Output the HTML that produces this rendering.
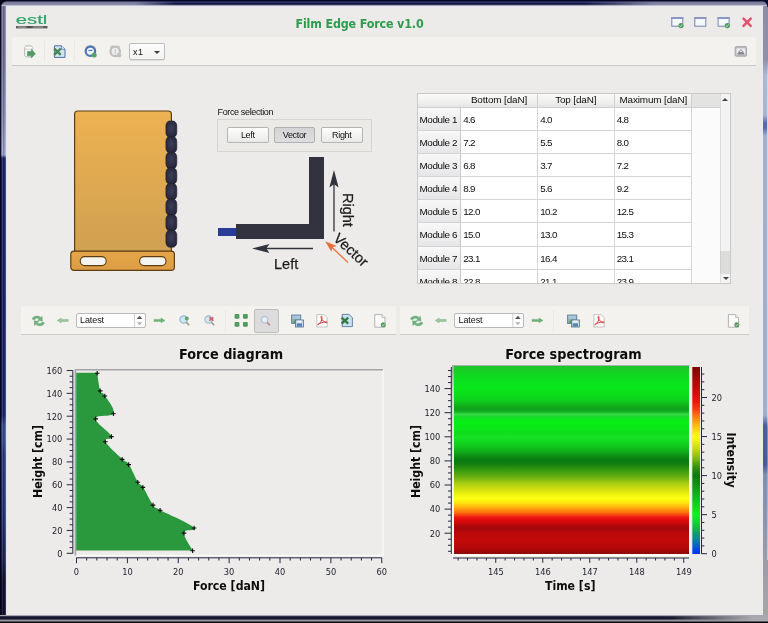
<!DOCTYPE html>
<html lang="en">
<head>
<meta charset="utf-8">
<title>Film Edge Force v1.0</title>
<style>
*{box-sizing:border-box;margin:0;padding:0}
html,body{width:768px;height:623px;overflow:hidden}
body{position:relative;background:#ecebe9;font-family:"Liberation Sans","DejaVu Sans",sans-serif;color:#1a1a1a;font-size:10px}
.abs{position:absolute}
/* window frame */
#fr-top{left:0;top:0;width:768px;height:6px;background:linear-gradient(to bottom,#03031a 0,#05052c 1px,#333d78 1.900px,#2b3269 2.700px,#15153c 3.500px,#32325a 4.500px,#8c8ca6 5.300px,#e6e6f0 6px)}
#fr-top2{left:0;top:0;width:768px;height:6px;background:linear-gradient(to bottom,#04041c 0,#0a0a2a 1.100px,#74749a 1.800px,#8383a2 3.600px,#8c8caa 4.800px,#b8b8c8 5.400px,#e6e6ea 6px);-webkit-mask-image:linear-gradient(to right,#000 0,#000 135px,transparent 175px,transparent 585px,#000 655px);mask-image:linear-gradient(to right,#000 0,#000 135px,transparent 175px,transparent 585px,#000 655px)}
#fr-thl{left:6px;top:6px;width:757px;height:2px;background:linear-gradient(to bottom,#e7e7f2,#ecebea)}
#fr-left{left:0;top:0;width:6px;height:623px;background:linear-gradient(to bottom,#7b7b9b 0,#7d7d9d 60px,#8a8eb2 110px,#a2aace 150px,#a4acd0 155px,#1e2668 158px,#1c2466 300px,#1c2868 415px,#3a5292 425px,#3c5494 440px,#2e3e84 455px,#2a3a7c 500px,#1c2450 560px,#0e0e28 580px,#0c0c24 623px)}
#fr-left2{left:0;top:0;width:6px;height:623px;background:linear-gradient(to right,rgba(2,2,28,1) 0,rgba(2,2,28,.85) 1px,rgba(2,2,28,0) 1.800px,rgba(255,255,255,.12) 2.400px,rgba(0,0,40,.25) 3.400px,rgba(0,0,40,.15) 4.200px,rgba(255,255,255,.1) 5px,rgba(255,255,255,.2) 6px)}
#fr-left3{display:none}
#fr-lhl{left:6px;top:6px;width:2px;height:610px;background:linear-gradient(to right,#e4e4f2,#ecebea)}
#fr-right{left:763px;top:0;width:5px;height:623px;background:linear-gradient(to bottom,#8c8ca8 0,#9090aa 60px,#aeb6d0 75px,#acb4d0 115px,#5a6aa6 123px,#5c6ca8 128px,#a6b0ce 136px,#a4aecd 415px,#4e5e9c 425px,#4a5a98 465px,#8090b2 475px,#8c94b0 520px,#9c9ca8 560px,#a8a8aa 623px)}
#fr-right2{left:766.500px;top:60px;width:1.500px;height:500px;background:linear-gradient(to bottom,rgba(200,216,255,0),rgba(200,216,255,1) 20px,rgba(200,216,255,1) 350px,rgba(200,216,255,.4) 370px,rgba(200,216,255,.4) 420px,rgba(210,215,235,.8) 500px)}
#fr-right3{display:none}
#fr-bot{left:0;top:615px;width:768px;height:8px;background:linear-gradient(to bottom,#f4f4f6 0,#3a3a52 1.200px,#1a1a30 2.500px,#15152a 4px,#8a8a96 5px,#9a9aa2 6px,#101018 7px,#000 8px)}
#fr-bot2{left:670px;top:616px;width:98px;height:4.500px;background:linear-gradient(to right,rgba(160,160,166,0),rgba(150,150,156,.7) 50%,rgba(172,172,176,.98) 85%)}
/* title */
#title{left:0;top:14.700px;width:719px;text-align:center;font-family:"DejaVu Sans Condensed","DejaVu Sans","Liberation Sans",sans-serif;font-weight:bold;font-size:12.400px;color:#2d9b4e;letter-spacing:-.15px;line-height:18px}
.band{background:#f3f2ef;border-bottom:1.400px solid #cdcbc9}
.sep{width:1px;background:#e9e8e5}
.combo{background:linear-gradient(#fcfcfc,#f3f3f2);border:1px solid #bdbdbd;border-radius:2px;box-shadow:0 1px 0 #dedede}
.spin{background:#fff;border:1px solid #b9b9b9;border-radius:2px;font-size:9px;line-height:13px;padding-left:3.600px;letter-spacing:-.12px;color:#111}
.btn{border:1px solid #b4b4b4;border-radius:2px;background:linear-gradient(#fefefe,#f4f4f3 50%,#e9e9e8);text-align:center;font-size:9px;line-height:14px;color:#111;letter-spacing:-.35px}
.btn.on{background:linear-gradient(#d4d4d6,#dedee0);border-color:#b0b0b4}

#tbl{left:417px;top:93px;width:314px;height:190.500px;background:#fbfbfb;border:1px solid #c9c9c9;overflow:hidden}
#tbl .h{position:absolute;white-space:nowrap;overflow:hidden;top:0;height:13.700px;background:linear-gradient(#fafafa,#f0f0ef 60%,#e6e6e5);border-right:1px solid #cfcfcf;border-bottom:1px solid #cfcfcf;text-align:center;font-size:9.900px;line-height:12.500px;letter-spacing:-.12px;color:#0c0c0c}
#tbl .rh{position:absolute;left:0;width:43px;height:23.150px;background:linear-gradient(#f8f8f8,#eeeeef 55%,#e6e6e9);border-right:1px solid #c9c9c9;border-bottom:1px solid #d4d4d4;font-size:9.900px;line-height:23px;padding-left:1.500px;letter-spacing:-.38px;color:#0c0c0c;white-space:nowrap}
#tbl .c{position:absolute;height:23.150px;background:#fff;border-right:1px solid #d4d4d4;border-bottom:1px solid #d4d4d4;font-size:9.800px;line-height:23px;padding-left:2.200px;letter-spacing:-.62px;color:#0c0c0c}
</style>
</head>
<body>
<div id="root" class="abs" style="left:0;top:0;width:768px;height:623px;will-change:transform">
<div id="content" class="abs" style="left:0;top:0;width:768px;height:623px;filter:blur(.5px)">
<!-- title bar -->
<div id="title" class="abs">Film Edge Force v1.0</div>

<!-- logo -->
<svg class="abs" style="left:14px;top:12px" width="38" height="20" viewBox="0 0 38 20">
<text x="1.8" y="12.100" font-family="Liberation Sans, sans-serif" font-size="13.500" fill="#33a068" stroke="#33a068" stroke-width=".2" textLength="31.500" lengthAdjust="spacingAndGlyphs">estl</text>
<rect x="2" y="14" width="31.500" height="2.400" fill="#5e5e5e"/>
<rect x="4" y="14.6" width="8" height="1" fill="#a8a8a8"/><rect x="14" y="14.6" width="3" height="1" fill="#3a3a3a"/><rect x="19" y="14.6" width="10" height="1" fill="#a0a0a0"/>
</svg>
<!-- window buttons -->
<svg class="abs" style="left:668px;top:14px" width="90" height="17" viewBox="0 0 90 17">
<g id="wi"><rect x="3.8" y="3.6" width="11" height="8.6" fill="#f4f7fc" stroke="#7682b2" stroke-width="1"/><rect x="3.3" y="3" width="12" height="2" fill="#8b96c4"/></g>
<circle cx="13" cy="11.6" r="2.6" fill="#4d9a5c"/><path d="M11.6 11.6l1 1.2 1.8-2.4" stroke="#d8f0d8" stroke-width=".8" fill="none"/>
<use href="#wi" x="23"/>
<use href="#wi" x="46.3"/>
<circle cx="59.3" cy="11.6" r="2.6" fill="#4d9a5c"/><path d="M57.9 11.6l1 1.2 1.8-2.4" stroke="#d8f0d8" stroke-width=".8" fill="none"/>
<path d="M75.500 4.700l7.200 7.200M82.700 4.700l-7.200 7.200" stroke="#e0526e" stroke-width="2.500" stroke-linecap="round"/>
</svg>
<!-- top toolbar -->
<div class="abs band" style="left:12px;top:37px;width:744px;height:29px"></div>
<div class="abs sep" style="left:44px;top:41px;height:21px"></div>
<div class="abs sep" style="left:74px;top:41px;height:21px"></div>
<div class="abs combo" style="left:129px;top:43px;width:36px;height:17px"><span class="abs" style="left:3px;top:1.500px;font-size:9px;line-height:13px;letter-spacing:.5px;color:#111">x1</span><span class="abs" style="left:23.500px;top:6.500px;width:0;height:0;border-left:3.200px solid transparent;border-right:3.200px solid transparent;border-top:3.200px solid #3a3a3a"></span></div>

<!-- top toolbar icons -->
<svg class="abs" style="left:22px;top:43px;opacity:.88" width="104" height="17" viewBox="0 0 104 17">
<!-- db + arrow -->
<path d="M2.6 4.6c0-2.6 8-2.6 8 0v7.6c0 2.4-8 2.4-8 0z" fill="#f6f7f5" stroke="#a3aba3" stroke-width=".9"/>
<ellipse cx="6.6" cy="4.7" rx="4" ry="1.6" fill="#fdfdfd" stroke="#b4bab4" stroke-width=".7"/>
<path d="M5.4 8.6h4v-2.2l4 4.3-4 4.3v-2.2h-4z" fill="#3f8f52" stroke="#2f7a42" stroke-width=".5"/>
<!-- excel -->
<path d="M32.4 2.8h7l3.6 3.4v8.2h-10.6z" fill="#cde3f5" stroke="#3d5c9c" stroke-width="1"/>
<path d="M39.4 2.8v3.4h3.6" fill="#eaf3fb" stroke="#3d5c9c" stroke-width=".8"/>
<path d="M32.2 5.6l6.6 6.2M38.8 5.6l-6.6 6.2" stroke="#2b7a3c" stroke-width="2.4"/>
<!-- refresh blue -->
<rect x="63.2" y="2.6" width="10.6" height="10.6" rx="1.5" fill="#ece2a0" opacity=".75"/>
<circle cx="68.4" cy="8.2" r="4.7" fill="#f2f8fc" stroke="#3b64b2" stroke-width="2.3"/>
<path d="M66.4 7.4h4" stroke="#3b64b2" stroke-width="1.2"/>
<circle cx="72.2" cy="12" r="2.5" fill="#3f9a4e"/>
<!-- refresh gray -->
<circle cx="93.2" cy="8.4" r="4.7" fill="#eeeeee" stroke="#b9b9b9" stroke-width="2.3"/>
<path d="M88 4.4l3-1.8M95 2.6l3 1.8" stroke="#c4c4c4" stroke-width="1.4"/>
<path d="M93.2 6v5" stroke="#c8c8c8" stroke-width="1.4"/>
<circle cx="97" cy="12.2" r="2.4" fill="#bdbdbd"/>
</svg>
<svg class="abs" style="left:734px;top:45px" width="14" height="13" viewBox="0 0 14 13">
<rect x="1.2" y="1.6" width="11.4" height="9.6" rx="1" fill="#b9bac0" stroke="#a2a3aa" stroke-width=".9"/>
<rect x="2.600" y="3.400" width="8.600" height="6.400" fill="#f2f2f2"/>
<path d="M4.400 7.400l2.500-2.800 2.500 2.800z" fill="none" stroke="#6a6a70" stroke-width=".8"/>
<rect x="3.400" y="8.300" width="7" height="1.100" fill="#55555a"/>
</svg>
<!-- holder graphic -->
<svg class="abs" style="left:66px;top:106px" width="176" height="170" viewBox="0 0 176 170">
<defs>
<linearGradient id="gh" x1="0" y1="0" x2="0" y2="1"><stop offset="0" stop-color="#edb252"/><stop offset=".35" stop-color="#e3ab50"/><stop offset="1" stop-color="#cfa152"/></linearGradient>
<linearGradient id="gb" x1="0" y1="0" x2="0" y2="1"><stop offset="0" stop-color="#e6a648"/><stop offset="1" stop-color="#dc9c44"/></linearGradient>
<radialGradient id="gs" cx=".5" cy=".45" r=".6"><stop offset="0" stop-color="#3e3e58"/><stop offset="1" stop-color="#23233a"/></radialGradient>
</defs>
<path d="M8.6 146V8.2q0-3.2 3.2-3.2h90.4q3.2 0 3.2 3.200V146z" fill="url(#gh)" stroke="#5c3d12" stroke-width="1.2"/>
<g fill="url(#gs)" stroke="#1c1c30" stroke-width=".6">
<rect x="99.900" y="15" width="10.900" height="16.400" rx="3.800" ry="5"/>
<rect x="99.900" y="30.6" width="10.900" height="16.400" rx="3.800" ry="5"/>
<rect x="99.900" y="46.200" width="10.900" height="16.400" rx="3.800" ry="5"/>
<rect x="99.900" y="61.8" width="10.900" height="16.400" rx="3.800" ry="5"/>
<rect x="99.900" y="77.4" width="10.900" height="16.400" rx="3.800" ry="5"/>
<rect x="99.900" y="93" width="10.900" height="16.400" rx="3.800" ry="5"/>
<rect x="99.900" y="108.6" width="10.900" height="16.400" rx="3.800" ry="5"/>
<rect x="99.900" y="124.200" width="10.900" height="17" rx="3.800" ry="5"/>
</g>
<rect x="4.800" y="145.200" width="103.6" height="19.200" rx="3.2" fill="url(#gb)" stroke="#5c3d12" stroke-width="1.2"/>
<rect x="14.200" y="150.600" width="26" height="9" rx="4.500" fill="#f5f3ef" stroke="#5c3d12" stroke-width="1.1"/>
<rect x="73.6" y="150.600" width="26.400" height="9" rx="4.500" fill="#f5f3ef" stroke="#5c3d12" stroke-width="1.1"/>
</svg>
<!-- force selection -->
<div class="abs" style="left:217.500px;top:105.800px;font-size:9px;line-height:13px;color:#111;letter-spacing:-.36px">Force selection</div>
<div class="abs" style="left:217px;top:119px;width:155px;height:33px;border:1px solid #d6d5d3;background:#ebeae7"></div>
<div class="abs btn" style="left:227px;top:127.200px;width:41.500px;height:15.400px">Left</div>
<div class="abs btn on" style="left:274px;top:127.200px;width:41px;height:15.400px">Vector</div>
<div class="abs btn" style="left:320.500px;top:127.200px;width:42.500px;height:15.400px">Right</div>
<!-- L diagram -->
<svg class="abs" style="left:210px;top:152px" width="180" height="130" viewBox="0 0 180 130">
<rect x="8" y="76" width="19" height="8" fill="#2b3b9a"/>
<path d="M99 5h15v82h-88v-15h73z" fill="#33333f"/>
<path d="M124 79.500V30" stroke="#33333f" stroke-width="1.300"/>
<path d="M124 18l4.600 17.500-4.600-3.200-4.600 3.200z" fill="#33333f"/>
<path d="M103 96.500H56" stroke="#33333f" stroke-width="1.300"/>
<path d="M42 96.500l17.500-4.400-3.200 4.400 3.200 4.400z" fill="#33333f"/>
<path d="M138 110.500L121.500 95" stroke="#e8703a" stroke-width="1.200"/>
<path d="M115.200 89.300l11.400 4.800-4.300 1.300-.9 4.400z" fill="#e8703a"/>
<text x="64" y="117.400" font-family="Liberation Sans, sans-serif" font-size="14.500" fill="#1c1c1c" stroke="#1c1c1c" stroke-width=".25">Left</text>
<text transform="translate(133.400,41) rotate(90)" font-family="Liberation Sans, sans-serif" font-size="14.500" fill="#1c1c1c" stroke="#1c1c1c" stroke-width=".25">Right</text>
<text transform="translate(122.600,87.400) rotate(43)" font-family="Liberation Sans, sans-serif" font-size="14.500" fill="#1c1c1c" stroke="#1c1c1c" stroke-width=".25">Vector</text>
</svg>
<!-- table -->
<div id="tbl" class="abs">
<div class="h" style="left:0;width:43px;border-right:none"></div><div class="h" style="left:43px;width:77px">Bottom [daN]</div><div class="h" style="left:120px;width:76.500px">Top [daN]</div><div class="h" style="left:196.500px;width:77.500px;padding-left:1px">Maximum [daN]</div><div class="h" style="left:274px;width:28px;background:#e3e3e2;border-right:none"></div>
<div class="rh" style="top:13.70px">Module 1</div><div class="c" style="top:13.70px;left:43px;width:77px">4.6</div><div class="c" style="top:13.70px;left:120px;width:76.500px">4.0</div><div class="c" style="top:13.70px;left:196.500px;width:77.500px">4.8</div>
<div class="rh" style="top:36.85px">Module 2</div><div class="c" style="top:36.85px;left:43px;width:77px">7.2</div><div class="c" style="top:36.85px;left:120px;width:76.500px">5.5</div><div class="c" style="top:36.85px;left:196.500px;width:77.500px">8.0</div>
<div class="rh" style="top:60.00px">Module 3</div><div class="c" style="top:60.00px;left:43px;width:77px">6.8</div><div class="c" style="top:60.00px;left:120px;width:76.500px">3.7</div><div class="c" style="top:60.00px;left:196.500px;width:77.500px">7.2</div>
<div class="rh" style="top:83.15px">Module 4</div><div class="c" style="top:83.15px;left:43px;width:77px">8.9</div><div class="c" style="top:83.15px;left:120px;width:76.500px">5.6</div><div class="c" style="top:83.15px;left:196.500px;width:77.500px">9.2</div>
<div class="rh" style="top:106.30px">Module 5</div><div class="c" style="top:106.30px;left:43px;width:77px">12.0</div><div class="c" style="top:106.30px;left:120px;width:76.500px">10.2</div><div class="c" style="top:106.30px;left:196.500px;width:77.500px">12.5</div>
<div class="rh" style="top:129.45px">Module 6</div><div class="c" style="top:129.45px;left:43px;width:77px">15.0</div><div class="c" style="top:129.45px;left:120px;width:76.500px">13.0</div><div class="c" style="top:129.45px;left:196.500px;width:77.500px">15.3</div>
<div class="rh" style="top:152.60px">Module 7</div><div class="c" style="top:152.60px;left:43px;width:77px">23.1</div><div class="c" style="top:152.60px;left:120px;width:76.500px">16.4</div><div class="c" style="top:152.60px;left:196.500px;width:77.500px">23.1</div>
<div class="rh" style="top:175.75px">Module 8</div><div class="c" style="top:175.75px;left:43px;width:77px">22.8</div><div class="c" style="top:175.75px;left:120px;width:76.500px">21.1</div><div class="c" style="top:175.75px;left:196.500px;width:77.500px">23.9</div>
<div style="position:absolute;left:302px;top:0;width:11px;height:189px;background:#f3f3f3;border-left:1px solid #dcdcdc"></div>
<div style="position:absolute;left:302px;top:157px;width:11px;height:23px;background:#dddddc;border-left:1px solid #d0d0d0"></div>
<div style="position:absolute;left:304.300px;top:3.800px;width:0;height:0;border-left:3px solid transparent;border-right:3px solid transparent;border-bottom:3.200px solid #444"></div>
<div style="position:absolute;left:304.500px;top:183px;width:0;height:0;border-left:3px solid transparent;border-right:3px solid transparent;border-top:3.500px solid #444"></div>
</div>
<!-- chart toolbars -->
<div class="abs band" style="left:21px;top:305.500px;width:375px;height:29.500px"></div>
<div class="abs band" style="left:399.500px;top:305.500px;width:349px;height:29.500px"></div>
<div class="abs sep" style="left:225px;top:310px;height:21px"></div>
<div class="abs sep" style="left:553px;top:310px;height:21px"></div>
<div class="abs" style="left:254px;top:309px;width:24.500px;height:24px;background:#dcdcdc;border:1px solid #bdbdbd;border-radius:2px"></div>
<div class="abs spin" style="left:75.500px;top:313px;width:70px;height:15px">Latest</div>
<div class="abs spin" style="left:454px;top:313px;width:70px;height:15px">Latest</div>
<svg class="abs" style="left:26px;top:309px" width="366" height="24" viewBox="0 0 366 24">
<defs>
<g id="rf"><path d="M2.400 6.600c1.400-3.200 6.200-3.800 8.600-1.400l1.500-1.300.4 4.800-4.700-.5 1.400-1.400c-1.600-1.500-4-1.100-5 .9z" fill="#72b080" stroke="#5c9e6a" stroke-width=".35"/><path d="M15 10.600c-1.400 3.200-6.200 3.800-8.600 1.400l-1.500 1.300-.4-4.800 4.700.5-1.400 1.400c1.600 1.500 4 1.100 5-.9z" fill="#72b080" stroke="#5c9e6a" stroke-width=".35"/></g>
<g id="la"><path d="M0 2.400l4-2.400v1.400h7v2h-7v1.400z" fill="#9cc79e" stroke="#7fb584" stroke-width=".5"/></g>
<g id="ra"><path d="M11.400 2.400l-4-2.400v1.400h-7v2h7v1.400z" fill="#6fb277" stroke="#5ea468" stroke-width=".4"/></g>
<g id="sp"><path d="M0 0v13" stroke="#c4c4c4" stroke-width=".8"/><path d="M2.300 5l2.800-3.200 2.800 3.200z" fill="#555"/><path d="M2.500 8.200l2.600 3 2.600-3z" fill="#b0b0b0"/></g>
<g id="sv"><rect x=".6" y=".8" width="9.200" height="8.600" fill="#8fb0a8" stroke="#5a7a9a" stroke-width=".8"/><rect x="1.400" y="1.600" width="7.600" height="3" fill="#a9c6de"/><path d="M1.400 8.600l2.600-3 2 1.800 1.600-1.400 1.400 1.400v1.200z" fill="#5c9a6a"/><rect x="4.400" y="5.800" width="8" height="7" fill="#c6d8ea" stroke="#4f6f98" stroke-width=".8"/><rect x="5.800" y="9.200" width="5.200" height="3.200" fill="#5a80b4"/><rect x="6.400" y="6.400" width="4" height="1.800" fill="#f4f7fa"/></g>
<g id="pdf"><path d="M.8.600h7.400l3 3v9.400h-10.400z" fill="#fbfbfb" stroke="#b9b9b9" stroke-width=".8"/><path d="M1.600 10.800c3.400-1.600 4.800-5.600 4.400-8-.3-1.200-1.500-.6-1 .8.800 2.400 3.200 5 5.400 5.200 1.400 0 .8-1.300-.6-1.100-2.800.3-5.800 1.500-8.200 3.100z" fill="none" stroke="#d8453e" stroke-width="1"/></g>
<g id="doc"><path d="M.8.600h7.200l3 3v9.600h-10.200z" fill="#fcfcfc" stroke="#a9ada9" stroke-width=".9"/><path d="M8 .6v3h3" fill="#ececec" stroke="#a9ada9" stroke-width=".7"/><circle cx="9.200" cy="10.800" r="2.500" fill="#5a9a62"/><path d="M8 10.800l1 1 1.600-2" stroke="#e2f2e2" stroke-width=".7" fill="none"/></g>
</defs>
<use href="#rf" x="3.600" y="3.300"/>
<use href="#la" x="31.200" y="9"/>
<use href="#sp" x="108.500" y="5"/>
<use href="#ra" x="127.600" y="9"/>
<!-- zoom in -->
<circle cx="157.600" cy="10.600" r="3.700" fill="#cfe6f4" stroke="#8fb4cc" stroke-width="1.100"/><path d="M160.400 13.400l2.800 2.800" stroke="#9a9a8a" stroke-width="1.600"/><circle cx="160.800" cy="9.600" r="2" fill="#5fa86a"/>
<!-- zoom out -->
<circle cx="182.600" cy="10.600" r="3.700" fill="#d6e6f2" stroke="#9ab8cc" stroke-width="1.100"/><path d="M185.400 13.400l2.800 2.800" stroke="#9a9a8a" stroke-width="1.600"/><path d="M183.400 8.400l4 3.200M187.400 8.400l-4 3.200" stroke="#d45a6a" stroke-width="1.500"/>
<!-- grid -->
<g fill="#4f9c5c"><rect x="208.600" y="5" width="4.800" height="4.800" rx="1"/><rect x="217" y="5" width="4.800" height="4.800" rx="1"/><rect x="208.600" y="13" width="4.800" height="4.800" rx="1"/><rect x="217" y="13" width="4.800" height="4.800" rx="1"/></g>
<!-- magnifier on pressed btn -->
<circle cx="238.600" cy="10.800" r="3.400" fill="#e4ecf6" stroke="#a9b6d6" stroke-width="1"/><path d="M241 13.400l3 3" stroke="#c48a8a" stroke-width="1.500"/>
<use href="#sv" x="265" y="5.200"/>
<use href="#pdf" x="290" y="5"/>
<!-- excel -->
<path d="M316.200 5.400h6.800l3.400 3.200v9h-10.200z" fill="#c9e2f2" stroke="#5a78a4" stroke-width=".9"/><path d="M315.600 8.600l6.600 6M322.200 8.600l-6.600 6" stroke="#2f7a42" stroke-width="2.300"/>
<use href="#doc" x="348" y="5"/>
</svg>
<svg class="abs" style="left:404px;top:309px" width="340" height="24" viewBox="0 0 340 24">
<use href="#rf" x="4" y="3.300"/>
<use href="#la" x="31.200" y="9"/>
<use href="#sp" x="108.800" y="5"/>
<use href="#ra" x="127.600" y="9"/>
<use href="#sv" x="163" y="5.200"/>
<use href="#pdf" x="189" y="5"/>
<use href="#doc" x="323.600" y="5"/>
</svg>
<!-- charts -->
<svg class="abs" style="left:0;top:340px" width="768" height="276" viewBox="0 340 768 276">
<defs><linearGradient id="spg" x1="0" y1="0" x2="0" y2="1"><stop offset="0.0000" stop-color="#1fc42a"/><stop offset="0.0213" stop-color="#18cc24"/><stop offset="0.0479" stop-color="#10d820"/><stop offset="0.0798" stop-color="#0ae01c"/><stop offset="0.1117" stop-color="#08e81a"/><stop offset="0.1383" stop-color="#0ae01a"/><stop offset="0.1649" stop-color="#0cd81c"/><stop offset="0.1862" stop-color="#0ecc1c"/><stop offset="0.2021" stop-color="#10b81c"/><stop offset="0.2234" stop-color="#10a41a"/><stop offset="0.2367" stop-color="#10a81c"/><stop offset="0.2473" stop-color="#1cc02c"/><stop offset="0.2569" stop-color="#38dc48"/><stop offset="0.2660" stop-color="#20d832"/><stop offset="0.2766" stop-color="#10e220"/><stop offset="0.3005" stop-color="#08ee14"/><stop offset="0.3298" stop-color="#0ae818"/><stop offset="0.3537" stop-color="#0ede1c"/><stop offset="0.3670" stop-color="#12e020"/><stop offset="0.3803" stop-color="#16e226"/><stop offset="0.3989" stop-color="#12d820"/><stop offset="0.4202" stop-color="#10cc1c"/><stop offset="0.4415" stop-color="#0eba1a"/><stop offset="0.4601" stop-color="#0ea818"/><stop offset="0.4787" stop-color="#0c9014"/><stop offset="0.5000" stop-color="#087a12"/><stop offset="0.5213" stop-color="#127e10"/><stop offset="0.5372" stop-color="#248c10"/><stop offset="0.5532" stop-color="#389a10"/><stop offset="0.5798" stop-color="#58a810"/><stop offset="0.6011" stop-color="#7cb810"/><stop offset="0.6197" stop-color="#a0c810"/><stop offset="0.6330" stop-color="#b4d210"/><stop offset="0.6489" stop-color="#c8dc10"/><stop offset="0.6729" stop-color="#e4ec10"/><stop offset="0.6915" stop-color="#f6f810"/><stop offset="0.7074" stop-color="#ffff10"/><stop offset="0.7287" stop-color="#ffe210"/><stop offset="0.7447" stop-color="#ffc210"/><stop offset="0.7606" stop-color="#ff9c10"/><stop offset="0.7793" stop-color="#ff7010"/><stop offset="0.7926" stop-color="#f84210"/><stop offset="0.8059" stop-color="#ee1610"/><stop offset="0.8191" stop-color="#e00c0c"/><stop offset="0.8324" stop-color="#d00a0a"/><stop offset="0.8484" stop-color="#b40808"/><stop offset="0.8617" stop-color="#a00808"/><stop offset="0.8750" stop-color="#ae0808"/><stop offset="0.8856" stop-color="#ba0808"/><stop offset="0.9255" stop-color="#c40a0a"/><stop offset="0.9654" stop-color="#b60808"/><stop offset="0.9840" stop-color="#a00808"/><stop offset="1.0000" stop-color="#900808"/></linearGradient>
<linearGradient id="cbg" x1="0" y1="1" x2="0" y2="0"><stop offset="0.0000" stop-color="#0030ff"/><stop offset="0.0251" stop-color="#0848e8"/><stop offset="0.0628" stop-color="#0c78b0"/><stop offset="0.1046" stop-color="#109870"/><stop offset="0.1464" stop-color="#10c040"/><stop offset="0.2092" stop-color="#0cf41c"/><stop offset="0.2720" stop-color="#10d01c"/><stop offset="0.3347" stop-color="#10a818"/><stop offset="0.4184" stop-color="#087810"/><stop offset="0.4603" stop-color="#2c9010"/><stop offset="0.5021" stop-color="#70b410"/><stop offset="0.5649" stop-color="#c8dc10"/><stop offset="0.6276" stop-color="#ffff10"/><stop offset="0.6695" stop-color="#ffd010"/><stop offset="0.7322" stop-color="#ff8010"/><stop offset="0.7741" stop-color="#f83c10"/><stop offset="0.8159" stop-color="#ee1410"/><stop offset="0.8787" stop-color="#cc0a0a"/><stop offset="0.9414" stop-color="#a00808"/><stop offset="1.0000" stop-color="#7c0606"/></linearGradient><linearGradient id="lfg" x1="0" y1="0" x2="0" y2="1"><stop offset="0" stop-color="#9aaa9a"/><stop offset=".15" stop-color="#d0d8d0"/><stop offset=".6" stop-color="#f0f2f0"/><stop offset="1" stop-color="#fdfdfd"/></linearGradient></defs>
<g font-family="DejaVu Sans Condensed, DejaVu Sans, Liberation Sans, sans-serif" font-weight="bold" fill="#0c0c0c" text-anchor="middle"><text x="231" y="359" font-size="14.300">Force diagram</text><text x="573.500" y="359" font-size="14.300">Force spectrogram</text><text x="229" y="589.500" font-size="12.200">Force [daN]</text><text x="570.200" y="589.500" font-size="12.200">Time [s]</text><text transform="translate(41.800,461.500) rotate(-90)" font-size="12.200">Height [cm]</text><text transform="translate(419.800,461.500) rotate(-90)" font-size="12.200">Height [cm]</text><text transform="translate(727,460) rotate(90)" font-size="12.200">Intensity</text></g>
<rect x="75.500" y="369" width="307.500" height="186.500" fill="#edecea"/><path d="M383 369.500V555.500H76" stroke="#fafafa" stroke-width="1.400" fill="none"/><path d="M75.400 555.500V369.700H383" stroke="#a4a4a8" stroke-width="1.500" fill="none"/>
<path d="M76.200 372.8L97.2 372.8C97.8 376.3 98.7 385.9 100.2 390.5C101.8 395.1 102.2 391.1 104.8 395.6C107.5 400.2 115.3 408.8 113.4 413.3C111.6 417.9 96.1 413.9 95.7 418.5C95.3 423.1 109.5 431.6 111.4 436.2C113.3 440.8 103.2 436.8 105.3 441.3C107.5 445.9 117.4 454.5 122.1 459.0C126.7 463.6 125.5 459.6 128.7 464.2C131.8 468.8 135.0 477.3 137.8 481.9C140.6 486.5 139.8 482.5 142.9 487.0C145.9 491.6 149.6 500.2 153.0 504.7C156.5 509.3 151.9 505.3 160.1 509.9C168.4 514.5 189.4 523.0 194.1 527.6C198.9 532.2 184.3 528.2 184.0 532.7C183.7 537.3 190.9 546.9 192.6 550.4L76.200 550.4z" fill="#2a993e"/>
<path d="M94.9 373.2h4.600M97.2 370.9v4.600M97.9 390.9h4.600M100.2 388.6v4.600M102.5 396.0h4.600M104.8 393.7v4.600M111.1 413.7h4.600M113.4 411.4v4.600M93.4 418.9h4.600M95.7 416.6v4.600M109.1 436.6h4.600M111.4 434.3v4.600M103.0 441.7h4.600M105.3 439.4v4.600M119.8 459.4h4.600M122.1 457.1v4.600M126.4 464.6h4.600M128.7 462.3v4.600M135.5 482.3h4.600M137.8 480.0v4.600M140.6 487.4h4.600M142.9 485.1v4.600M150.7 505.1h4.600M153.0 502.8v4.600M157.8 510.3h4.600M160.1 508.0v4.600M191.8 528.0h4.600M194.1 525.7v4.600M181.7 533.1h4.600M184.0 530.8v4.600M190.3 550.8h4.600M192.6 548.5v4.600" stroke="#0c0c0c" stroke-width="1.100" fill="none"/>
<path d="M72.800 370.300V553.300M66.700 553.30H72.800M69.600 547.59H72.800M69.600 541.88H72.800M69.600 536.16H72.800M66.700 530.45H72.800M69.600 524.74H72.800M69.600 519.02H72.800M69.600 513.31H72.800M66.700 507.60H72.800M69.600 501.89H72.800M69.600 496.17H72.800M69.600 490.46H72.800M66.700 484.75H72.800M69.600 479.04H72.800M69.600 473.32H72.800M69.600 467.61H72.800M66.700 461.90H72.800M69.600 456.19H72.800M69.600 450.47H72.800M69.600 444.76H72.800M66.700 439.05H72.800M69.600 433.34H72.800M69.600 427.62H72.800M69.600 421.91H72.800M66.700 416.20H72.800M69.600 410.49H72.800M69.600 404.77H72.800M69.600 399.06H72.800M66.700 393.35H72.800M69.600 387.64H72.800M69.600 381.92H72.800M69.600 376.21H72.800M66.700 370.50H72.800M76.500 557.800H381.800M76.50 557.800V563.200M86.67 557.800V560.500M96.85 557.800V560.500M107.03 557.800V560.500M117.20 557.800V560.500M127.38 557.800V563.200M137.55 557.800V560.500M147.73 557.800V560.500M157.90 557.800V560.500M168.07 557.800V560.500M178.25 557.800V563.200M188.43 557.800V560.500M198.60 557.800V560.500M208.78 557.800V560.500M218.95 557.800V560.500M229.12 557.800V563.200M239.30 557.800V560.500M249.48 557.800V560.500M259.65 557.800V560.500M269.83 557.800V560.500M280.00 557.800V563.200M290.18 557.800V560.500M300.35 557.800V560.500M310.52 557.800V560.500M320.70 557.800V560.500M330.88 557.800V563.200M341.05 557.800V560.500M351.23 557.800V560.500M361.40 557.800V560.500M371.58 557.800V560.500M381.75 557.800V563.200M451.300 367V554M448 551.27H451.300M448 545.25H451.300M448 539.22H451.300M444.500 533.20H451.300M448 527.17H451.300M448 521.15H451.300M448 515.12H451.300M444.500 509.10H451.300M448 503.07H451.300M448 497.05H451.300M448 491.02H451.300M444.500 485.00H451.300M448 478.97H451.300M448 472.95H451.300M448 466.92H451.300M444.500 460.90H451.300M448 454.87H451.300M448 448.85H451.300M448 442.82H451.300M444.500 436.80H451.300M448 430.77H451.300M448 424.75H451.300M448 418.72H451.300M444.500 412.70H451.300M448 406.67H451.300M448 400.65H451.300M448 394.62H451.300M444.500 388.60H451.300M448 382.57H451.300M448 376.55H451.300M448 370.52H451.300M453 558H689M458.15 558V560.500M467.55 558V560.500M476.95 558V560.500M486.35 558V560.500M495.75 558V562.800M505.15 558V560.500M514.55 558V560.500M523.95 558V560.500M533.35 558V560.500M542.75 558V562.800M552.15 558V560.500M561.55 558V560.500M570.95 558V560.500M580.35 558V560.500M589.75 558V562.800M599.15 558V560.500M608.55 558V560.500M617.95 558V560.500M627.35 558V560.500M636.75 558V562.800M646.15 558V560.500M655.55 558V560.500M664.95 558V560.500M674.35 558V560.500M683.75 558V562.800M701.500 367V553.800M701.500 553.70H707M701.500 545.89H704.300M701.500 538.08H704.300M701.500 530.27H704.300M701.500 522.46H704.300M701.500 514.65H707M701.500 506.84H704.300M701.500 499.03H704.300M701.500 491.22H704.300M701.500 483.41H704.300M701.500 475.60H707M701.500 467.79H704.300M701.500 459.98H704.300M701.500 452.17H704.300M701.500 444.36H704.300M701.500 436.55H707M701.500 428.74H704.300M701.500 420.93H704.300M701.500 413.12H704.300M701.500 405.31H704.300M701.500 397.50H707M701.500 389.69H704.300M701.500 381.88H704.300M701.500 374.07H704.300" stroke="#262640" stroke-width="1" fill="none"/>
<g font-family="DejaVu Sans Condensed, DejaVu Sans, Liberation Sans, sans-serif" font-size="9.200" fill="#1e1e28"><text x="62.400" y="556.6" text-anchor="end">0</text><text x="62.400" y="533.7" text-anchor="end">20</text><text x="62.400" y="510.9" text-anchor="end">40</text><text x="62.400" y="488.0" text-anchor="end">60</text><text x="62.400" y="465.2" text-anchor="end">80</text><text x="62.400" y="442.3" text-anchor="end">100</text><text x="62.400" y="419.5" text-anchor="end">120</text><text x="62.400" y="396.6" text-anchor="end">140</text><text x="62.400" y="373.8" text-anchor="end">160</text><text x="76.5" y="574.600" text-anchor="middle">0</text><text x="127.4" y="574.600" text-anchor="middle">10</text><text x="178.2" y="574.600" text-anchor="middle">20</text><text x="229.1" y="574.600" text-anchor="middle">30</text><text x="280.0" y="574.600" text-anchor="middle">40</text><text x="330.9" y="574.600" text-anchor="middle">50</text><text x="381.8" y="574.600" text-anchor="middle">60</text><text x="440.200" y="536.5" text-anchor="end">20</text><text x="440.200" y="512.4" text-anchor="end">40</text><text x="440.200" y="488.3" text-anchor="end">60</text><text x="440.200" y="464.2" text-anchor="end">80</text><text x="440.200" y="440.1" text-anchor="end">100</text><text x="440.200" y="416.0" text-anchor="end">120</text><text x="440.200" y="391.9" text-anchor="end">140</text><text x="495.8" y="575" text-anchor="middle">145</text><text x="542.8" y="575" text-anchor="middle">146</text><text x="589.8" y="575" text-anchor="middle">147</text><text x="636.8" y="575" text-anchor="middle">148</text><text x="683.8" y="575" text-anchor="middle">149</text><text x="711.500" y="557.4">0</text><text x="711.500" y="518.4">5</text><text x="711.500" y="479.3">10</text><text x="711.500" y="440.3">15</text><text x="711.500" y="401.2">20</text></g>
<rect x="452" y="365.300" width="238" height="2" fill="#8c9c8c"/><rect x="452" y="366" width="2.400" height="190.300" fill="url(#lfg)"/><rect x="454" y="366" width="235" height="188" fill="url(#spg)"/><rect x="689" y="366" width="1.800" height="189" fill="#fbfbfb"/><rect x="452" y="554" width="238.800" height="2.300" fill="#fbfbfb"/><rect x="692.300" y="367" width="7.700" height="187" fill="url(#cbg)"/>
</svg>
<!-- FRAME -->
</div>
<div id="fr-left" class="abs"></div>
<div id="fr-left2" class="abs"></div>
<div id="fr-left3" class="abs"></div>
<div id="fr-lhl" class="abs"></div>
<div id="fr-right" class="abs"></div>
<div id="fr-right2" class="abs"></div>
<div id="fr-right3" class="abs"></div>
<div id="fr-thl" class="abs"></div>
<div id="fr-top" class="abs"></div>
<div id="fr-top2" class="abs"></div>
<div id="fr-bot" class="abs"></div>
<div id="fr-bot2" class="abs"></div>
<div class="abs" style="left:0;top:0;width:8px;height:8px;background:radial-gradient(circle at 100% 100%,rgba(4,4,28,0) 6.600px,#04041c 7.600px)"></div>
<div class="abs" style="left:761px;top:0;width:7px;height:7px;background:radial-gradient(circle at 0 100%,rgba(4,4,28,0) 5.600px,#0a0a2c 6.800px)"></div>
</div>
</body>
</html>
